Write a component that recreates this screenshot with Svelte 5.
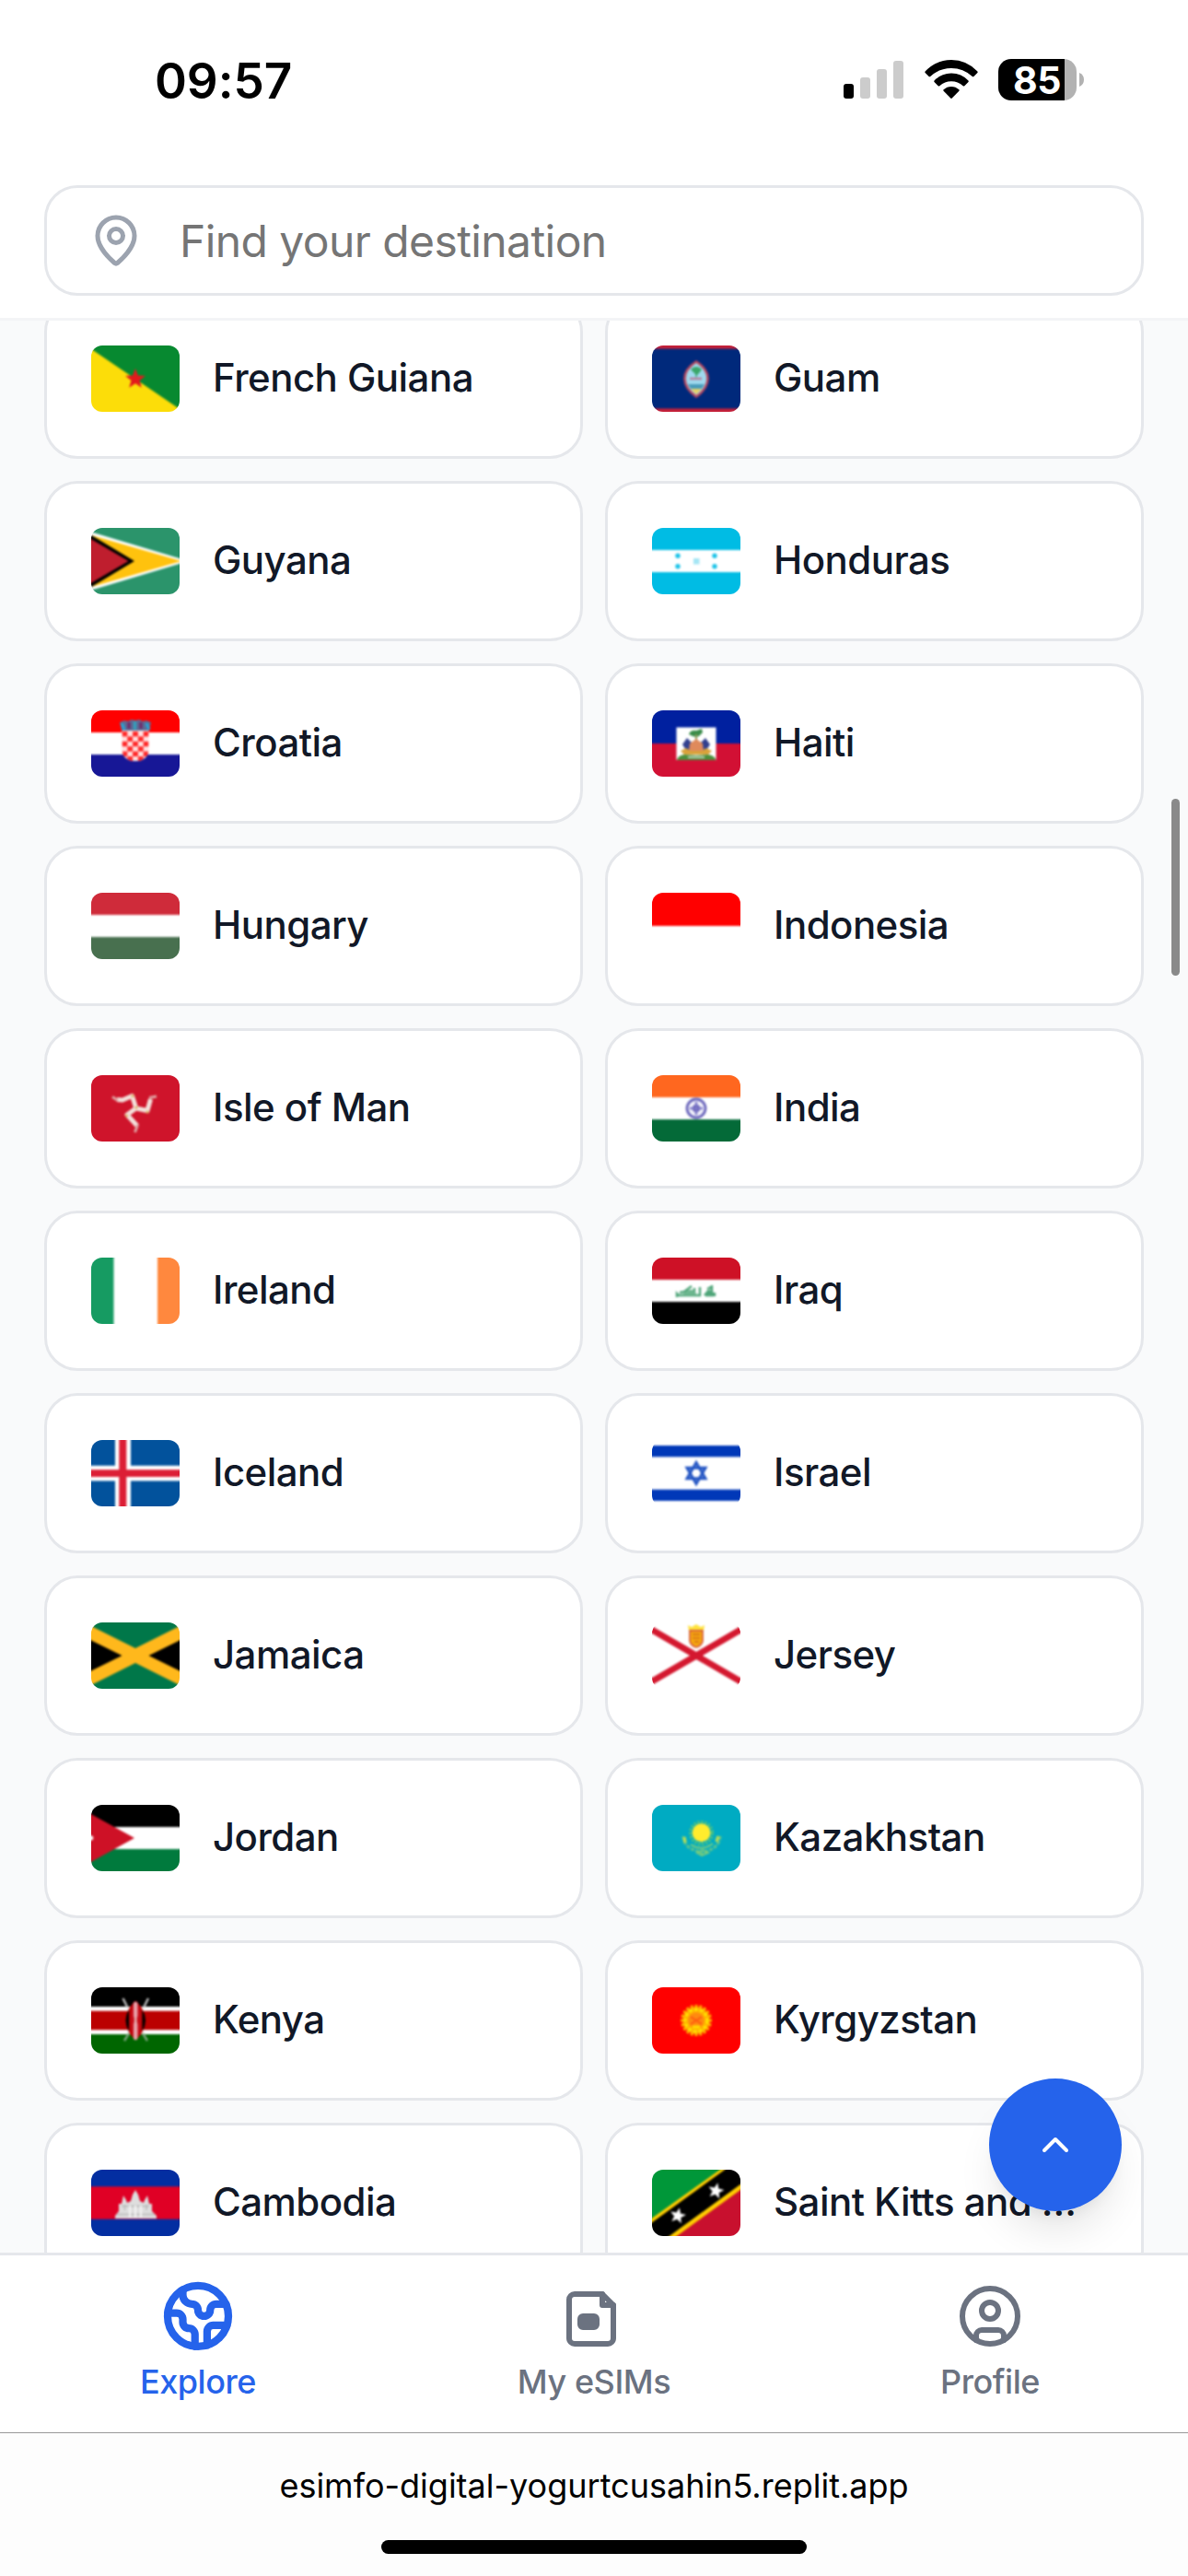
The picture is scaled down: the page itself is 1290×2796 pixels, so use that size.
<script>
  // Flags are drawn on a 96 x 72 canvas; backgrounds bleed past its edges.
  const band = (y, h, fill) => `<rect x="-8" y="${y}" width="112" height="${h}" fill="${fill}"/>`;
  const full = (fill) => band(-8, 88, fill);
  const tri = (top, mid, bottom) => band(-8, 32, top) + band(24, 24, mid) + band(48, 32, bottom);
  const poly = (points, fill) => `<polygon points="${points}" fill="${fill}"/>`;
  const star = (cx, cy, r, fill, turn = 0) => {
    const pts = [];
    for (let i = 0; i < 10; i++) {
      const a = ((i * 36 - 90 + turn) * Math.PI) / 180;
      const d = i % 2 ? r * 0.42 : r;
      pts.push(`${(cx + d * Math.cos(a)).toFixed(1)},${(cy + d * Math.sin(a)).toFixed(1)}`);
    }
    return poly(pts.join(' '), fill);
  };
  const dot = (cx, cy, r, fill) => `<circle cx="${cx}" cy="${cy}" r="${r}" fill="${fill}"/>`;

  let checks = '';
  for (let r = 0; r < 6; r++)
    for (let c = 0; c < 5; c++)
      if ((r + c) % 2 === 0) checks += `<rect x="${33.5 + c * 5.8}" y="${23 + r * 5.4}" width="5.8" height="5.4" fill="#ff2a2a"/>`;

  let rays = '';
  for (let i = 0; i < 20; i++) rays += `<path d="M48 19v8" stroke="#ffb400" stroke-width="3" transform="rotate(${i * 18} 48 36)"/>`;

  const countries = [
    { name: 'French Guiana', flag: full('#078930') + poly('-8,-1.6 104,74.4 104,84 -8,84', '#fcdd09') + star(48, 36.5, 11.5, '#e21a1c') },
    {
      name: 'Guam',
      flag: full('#c62139') + band(3.6, 64.8, '#00297b') +
        '<path d="M48 17.5Q61 26 60.500 36.500Q60 47 48 55.500Q36 47 35.500 36.500Q35 26 48 17.500Z" fill="#9fd9ee" stroke="#b5485f" stroke-width="2.6"/><path d="M42 26q6-6 12 0l-3 4-2 2-1 4-1-5z" fill="#3aa66a"/><path d="M41 36h13" stroke="#b77f9c" stroke-width="2.500"/><path d="M39 42h18l-3 5H42z" fill="#4a9cba"/><path d="M42 47h12l-6 6z" fill="#e8d265"/>'
    },
    { name: 'Guyana', flag: full('#2b946b') + poly('-8,2 102,35 102,37 -8,70', '#fff') + poly('-8,5.500 98,36 -8,66.500', '#ffc20e') + poly('-8,3 47,36 -8,69', '#000') + poly('-8,7.500 40.500,36 -8,64.500', '#bf1e2e') },
    {
      name: 'Honduras',
      flag: tri('#00bce4', '#fff', '#00bce4') + dot(28, 30.3, 2.7, '#1fc4e8') + dot(28, 41.7, 2.7, '#1fc4e8') + dot(68, 30.3, 2.7, '#1fc4e8') + dot(68, 41.7, 2.7, '#1fc4e8') + '<rect x="45" y="33" width="6.500" height="6.500" fill="#a5e6f5"/>'
    },
    {
      name: 'Croatia',
      flag: tri('#f00', '#fff', '#171796') +
        `<clipPath id="hr"><path d="M33.500 22h29v22q-1 8-10 11h-9q-9-3-10-11z"/></clipPath><g clip-path="url(#hr)"><rect x="33" y="22" width="30" height="34" fill="#ffe0e0"/>${checks}</g><path d="M31 13l5-2 4 1 4-2 4 1 4-1 4 2 4-1 5 2-2 9H33z" fill="#5b6c96"/><path d="M33 14l3 7M60 14l3 7" stroke="#2aa3d4" stroke-width="3"/><path d="M41 13v7M54 13v7" stroke="#702d6c" stroke-width="3.500"/><path d="M47.500 12v9" stroke="#32a0bd" stroke-width="3"/>`
    },
    {
      name: 'Haiti',
      flag: band(-8, 44, '#00209f') + band(36, 44, '#d21034') +
        '<rect x="26.500" y="18.500" width="43" height="35.500" fill="#fff"/><path d="M40 26q2-5 8-4l6-2 1 4-4 4-3 1-4-1z" fill="#3a8c4a"/><path d="M48 26v16" stroke="#8a9a55" stroke-width="2"/><path d="M33 37l5-7 5 5 1 7-6 3zM63 37l-5-7-5 5-1 7 6 3z" fill="#32408f"/><path d="M41 36l7-5 7 5 1 8H40z" fill="#df8a5c"/><path d="M31 44l6-3 5 3h12l5-3 6 3-4 4H35z" fill="#d9a23a"/><path d="M27 54q1-5 8-6l13 1 13-1q7 1 8.500 6z" fill="#4c8f3c"/><path d="M39 50h18v2H39z" fill="#b8cfb0"/>'
    },
    { name: 'Hungary', flag: tri('#cf2b3a', '#fff', '#48704f') },
    { name: 'Indonesia', flag: band(-8, 44, '#f00') + band(36, 44, '#fff') },
    {
      name: 'Isle of Man',
      flag: full('#cf142b') +
        '<g fill="none" stroke="#f3dfda" stroke-width="5" stroke-linejoin="round"><path d="M28 26.500L34 27L44.500 22.500L48.500 35"/><path d="M64.500 26L61 38.500L49 36"/><path d="M48.500 36L39 43L50 55"/></g><g fill="none" stroke="#dfa0a0" stroke-width="3"><path d="M23 23.500L29 27.500M71 23L63 24.500M50.500 54L47.500 62"/></g><g fill="#d9b25a"><circle cx="45" cy="22.500" r="1.500"/><circle cx="61" cy="40" r="1.500"/><circle cx="38.500" cy="44" r="1.500"/><circle cx="49" cy="35" r="1.500"/></g>'
    },
    {
      name: 'India',
      flag: tri('#ff671f', '#fff', '#046a38') + '<circle cx="48" cy="36" r="10" fill="#f1f1fa" stroke="#6a65bb" stroke-width="2.800"/><circle cx="48" cy="36" r="4" fill="#5750ae"/><path d="M48 29v14M41 36h14" stroke="#7e79c8" stroke-width="2.600"/>'
    },
    { name: 'Ireland', flag: full('#fff') + '<rect x="-8" y="-8" width="32.500" height="88" fill="#169b62"/><rect x="72" y="-8" width="32" height="88" fill="#ff883e"/>' },
    {
      name: 'Iraq',
      flag: tri('#ce1126', '#fff', '#000') + '<g fill="none" stroke="#4fa579" stroke-width="2.400"><path d="M27 43v-4l2 2h23v-9M30 38l5-1 8-6M36 40l2-3 5-1 3 3v-6M57 41l5-6M60 34l4-2 2 9M65 30v8l3 1v3M58 41h9"/></g>' + poly('31,41 38,36 44,35 50,41', '#6db68e') + poly('56,41 63,35 67,41', '#4fa579')
    },
    {
      name: 'Iceland',
      flag: full('#02529c') + '<rect x="26" y="-8" width="17" height="88" fill="#fff"/>' + band(27.8, 16.6, '#fff') + '<rect x="30.300" y="-8" width="8" height="88" fill="#dc1e35"/>' + band(32.2, 7.8, '#dc1e35')
    },
    {
      name: 'Israel',
      flag: full('#fff') + band(6, 12.3, '#0038b8') + band(53.7, 12.3, '#0038b8') + '<path d="M48 24.500l10 17.200H38zM48 47.500l10-17.200H38z" fill="none" stroke="#2456c4" stroke-width="3"/>'
    },
    { name: 'Jamaica', flag: full('#ffb81c') + poly('-8,0 -8,-8 104,-8 104,0 48,28', '#007749') + poly('-8,72 -8,80 104,80 104,72 48,44', '#007749') + poly('-8,15.500 33.500,36 -8,56.500', '#000') + poly('104,15.500 62.500,36 104,56.500', '#000') },
    {
      name: 'Jersey',
      flag: full('#fff') + '<path d="M-8 3.300L104 68.700M104 3.300L-8 68.700" stroke="#d4182f" stroke-width="7"/><path d="M39 3l4 2 5-3 5 3 4-2-1 6H40z" fill="#ffe23c"/><path d="M41 9h14v11q-1 5-7 7-6-2-7-7z" fill="#f6a80f" stroke="#d9623a" stroke-width="1.800"/><path d="M44 13h8M44 17h8M46 21h5" stroke="#d16a1a" stroke-width="1.500"/>'
    },
    { name: 'Jordan', flag: tri('#000', '#fff', '#007a3d') + poly('-8,5.700 47,36 -8,66.300', '#ce1126') + dot(-0.5, 36, 2.8, '#fff') },
    {
      name: 'Kazakhstan',
      flag: full('#00abc2') + '<circle cx="53.600" cy="30.500" r="12" fill="none" stroke="#64c96d" stroke-width="3" stroke-dasharray="2 2"/>' + dot(53.6, 30.3, 10, '#ffec2d') + '<path d="M34 34q1 13 15 16l5 3 6-3q13-4 14-16" fill="none" stroke="#5dc58c" stroke-width="3" stroke-dasharray="4 1.500"/><path d="M35 35l1 6M72 34l-2 6" stroke="#b3dc58" stroke-width="3.500"/><path d="M42 43q12 8 24-1M49 52l6-3 6 3-7 3z" fill="none" stroke="#79cc7c" stroke-width="2"/>'
    },
    {
      name: 'Kenya',
      flag: band(-8, 29, '#000') + band(21, 30, '#fff') + band(25.7, 20.5, '#b00') + band(51, 30, '#060') +
        '<path d="M34.500 12l5 10M62 12l-5 10" stroke="#bbb" stroke-width="2.400"/><path d="M36 58l5-8M61 58l-5-8" stroke="#7da47d" stroke-width="2.400"/><ellipse cx="48.200" cy="36" rx="9.500" ry="19" fill="#b00"/><path d="M41 24q-7 12 0 24zM55.500 24q7 12 0 24z" fill="#000"/><ellipse cx="48.200" cy="36" rx="6" ry="21" fill="#c60a16"/><path d="M48.200 18v13M48.200 40v15" stroke="#e9a0a8" stroke-width="4.500" stroke-linecap="round"/><path d="M48.200 32v7" stroke="#e6a6aa" stroke-width="3"/>'
    },
    { name: 'Kyrgyzstan', flag: full('#f00') + rays + dot(48, 36, 14.5, '#ffac00') + '<circle cx="48" cy="36" r="12" fill="none" stroke="#ffe000" stroke-width="3.500" stroke-dasharray="4 2"/>' + dot(48, 36, 8.5, '#ff8a10') + '<path d="M42 32l12 8M54 32l-12 8" stroke="#ff5a10" stroke-width="1.800"/><path d="M44 43h8" stroke="#ffe100" stroke-width="3"/>' },
    {
      name: 'Cambodia',
      flag: full('#032ea1') + band(18.3, 35.4, '#e00025') +
        '<path d="M26 53v-3l4-5v-8h3l2-9 3 5 1 3 4-2 2-7 3-5 3 5 2 7 4 2 1-3 3-5 2 9h3v8l5 5v3z" fill="#dedede"/><path d="M28 48.500h41M33 39.500h30" stroke="#b9b9b9" stroke-width="1.300"/><path d="M42 39v13M48 39v13M54 39v13" stroke="#f5f5f5" stroke-width="2"/><path d="M36.500 38v6M60 38v6" stroke="#b5b5b5" stroke-width="1.200"/>'
    },
    {
      name: 'Saint Kitts and Nevis',
      flag: full('#009739') + poly('104,-8 104,80 10,80', '#c8102e') + poly('-8,58.300 85,-8 104,-8 104,16 16,80 -8,80', '#ffcd00') + poly('-8,63 90,-8 104,-8 104,10 8,80 -8,80', '#000') + star(69.4, 23, 9, '#fff', 12) + star(28, 50, 9, '#fff', 12)
    }
  ];
</script>

<div class="screen">
  <header class="header">
    <div class="status">
      <span class="time">09:57</span>
      <div class="system">
        <svg class="signal" viewBox="0 0 65 42">
          <rect y="25" width="11" height="16" rx="3" fill="#000" />
          <rect x="18" y="18" width="11" height="23" rx="3" fill="#ccc" />
          <rect x="36" y="9" width="11" height="32" rx="3" fill="#ccc" />
          <rect x="54" y="0" width="11" height="41" rx="3" fill="#ccc" />
        </svg>
        <svg class="wifi" viewBox="0 0 58 42">
          <path d="M.6 12.500Q12.500 0 29 0t28.400 12.500q.6.800 0 1.500l-4 4q-.8.700-1.600 0Q42 9 29 9T6.200 18q-.8.700-1.600 0l-4-4q-.6-.7 0-1.500z" />
          <path d="M10.500 22.500Q18 14.500 29 14.500t18.500 8q.6.800 0 1.500l-4.200 4.200q-.8.700-1.600 0-5.500-4.900-12.700-4.900t-12.700 4.900q-.8.700-1.600 0L10.500 24q-.6-.7 0-1.500z" />
          <path d="M20.600 32.300q3.600-3.400 8.400-3.400t8.400 3.400q.6.700 0 1.400l-7.600 7.800q-.8.800-1.600 0l-7.600-7.800q-.6-.7 0-1.400z" />
        </svg>
        <div class="battery">
          <div class="cell"><span>85</span></div>
          <svg class="nub" viewBox="0 0 5 15"><path d="M0 0q5 2 5 7.500T0 15z" fill="#b2b2b2" /></svg>
        </div>
      </div>
    </div>
    <div class="search">
      <svg viewBox="0 0 24 24" class="pin">
        <path d="M20 10c0 4.993-5.539 10.193-7.399 11.799a1 1 0 0 1-1.202 0C9.539 20.193 4 14.993 4 10a8 8 0 0 1 16 0" />
        <circle cx="12" cy="10" r="3" />
      </svg>
      <span class="placeholder">Find your destination</span>
    </div>
  </header>

  <main class="list">
    <div class="grid">
      {#each countries as country}
        <div class="card">
          <svg class="flag" viewBox="0 0 96 72"><g class="art">{@html country.flag}</g></svg>
          <span class="name">{country.name}</span>
        </div>
      {/each}
    </div>
    <div class="scrollbar"></div>
    <button class="to-top" aria-label="Back to top">
      <svg viewBox="0 0 24 24"><path d="m18 15-6-6-6 6" /></svg>
    </button>
  </main>

  <nav class="tabs">
    <div class="tab active">
      <svg viewBox="0 0 24 24">
        <path d="M21.540 15H17a2 2 0 0 0-2 2v4.540" />
        <path d="M7 3.340V5a3 3 0 0 0 3 3a2 2 0 0 1 2 2c0 1.100.9 2 2 2a2 2 0 0 0 2-2c0-1.100.9-2 2-2h3.170" />
        <path d="M11 21.950V18a2 2 0 0 0-2-2a2 2 0 0 1-2-2v-1a2 2 0 0 0-2-2H2.050" />
        <circle cx="12" cy="12" r="10" />
      </svg>
      <span>Explore</span>
    </div>
    <div class="tab">
      <svg viewBox="0 0 24 24">
        <path d="M15 4H5a2 2 0 0 0-2 2v14a2 2 0 0 0 2 2h12a2 2 0 0 0 2-2V8z" />
        <path d="M15 4v4h4" />
        <rect x="7" y="12" width="6" height="4" rx="1" fill="currentColor" />
      </svg>
      <span>My eSIMs</span>
    </div>
    <div class="tab">
      <svg viewBox="0 0 24 24">
        <circle cx="12" cy="12" r="10" />
        <circle cx="12" cy="10" r="3" />
        <path d="M7 20.662V19a2 2 0 0 1 2-2h6a2 2 0 0 1 2 2v1.662" />
      </svg>
      <span>Profile</span>
    </div>
  </nav>

  <footer class="browser">
    <span class="url">esimfo-digital-yogurtcusahin5.replit.app</span>
    <div class="home"></div>
  </footer>
</div>

<style>
  :global(body) {
    margin: 0;
    background: #fff;
  }
  .screen {
    width: 1290px;
    height: 2796px;
    display: flex;
    flex-direction: column;
    overflow: hidden;
    background: #fff;
    font-family: Inter, 'Liberation Sans', sans-serif;
  }
  .screen * {
    box-sizing: border-box;
  }
  .header {
    flex: none;
    height: 348px;
    padding: 0 48px;
    border-bottom: 3px solid #f3f4f6;
  }
  .status {
    height: 201px;
    padding: 57px 65px 0 120px;
    display: flex;
    justify-content: space-between;
    align-items: flex-start;
  }
  .time {
    font-size: 53px;
    line-height: 62px;
    font-weight: 600;
    letter-spacing: -0.1px;
    color: #000;
  }
  .system {
    display: flex;
    align-items: flex-start;
    padding-top: 7px;
  }
  .signal {
    width: 65px;
    height: 42px;
    margin-top: 2px;
  }
  .wifi {
    width: 58px;
    height: 42px;
    margin: 1px 22px 0 23px;
  }
  .battery {
    display: flex;
    align-items: center;
    gap: 3px;
  }
  .cell {
    width: 85px;
    height: 45px;
    border-radius: 14px;
    background: linear-gradient(90deg, #000 72px, #b2b2b2 72px);
    color: #fff;
    font-size: 41px;
    line-height: 46px;
    font-weight: 700;
    letter-spacing: -0.5px;
    padding-left: 16px;
  }
  .nub {
    width: 5px;
    height: 15px;
  }
  .search {
    height: 120px;
    border: 3px solid #e5e7eb;
    border-radius: 36px;
    display: flex;
    align-items: center;
    gap: 39px;
    padding-left: 45px;
    font-size: 48px;
    line-height: 72px;
    letter-spacing: -0.58px;
    color: #757575;
  }
  .placeholder {
    padding-top: 2px;
  }
  .pin {
    width: 60px;
    height: 60px;
    fill: none;
    stroke: #9ca3af;
    stroke-width: 2;
    stroke-linecap: round;
    stroke-linejoin: round;
  }
  .list {
    flex: 1;
    min-height: 0;
    position: relative;
    overflow: hidden;
    background: #f9fafb;
    padding: 0 48px;
  }
  .grid {
    display: grid;
    grid-template-columns: 1fr 1fr;
    grid-auto-rows: 174px;
    gap: 24px;
    margin-top: -24px;
  }
  .card {
    min-width: 0;
    display: flex;
    align-items: center;
    gap: 36px;
    padding: 0 48px;
    background: #fff;
    border: 3px solid #e5e7eb;
    border-radius: 36px;
  }
  .flag {
    flex: none;
    width: 96px;
    height: 72px;
    border-radius: 12px;
    overflow: hidden;
  }
  .art {
    filter: blur(0.8px);
  }
  .name {
    min-width: 0;
    overflow: hidden;
    text-overflow: ellipsis;
    white-space: nowrap;
    padding-bottom: 3px;
    font-size: 42px;
    line-height: 60px;
    font-weight: 500;
    letter-spacing: -0.54px;
    color: #111827;
  }
  .scrollbar {
    position: absolute;
    right: 9px;
    top: 519px;
    width: 9px;
    height: 192px;
    border-radius: 5px;
    background: #8a8a8a;
  }
  .to-top {
    position: absolute;
    right: 72px;
    bottom: 45px;
    width: 144px;
    height: 144px;
    padding: 0;
    border: 0;
    border-radius: 50%;
    background: #2563eb;
    display: flex;
    align-items: center;
    justify-content: center;
    box-shadow: 0 30px 45px -9px rgb(0 0 0 / 0.1), 0 12px 18px -12px rgb(0 0 0 / 0.1);
  }
  .to-top svg {
    width: 48px;
    height: 48px;
    fill: none;
    stroke: #fff;
    stroke-width: 2;
    stroke-linecap: round;
    stroke-linejoin: round;
  }
  .tabs {
    flex: none;
    height: 195px;
    border-top: 3px solid #e5e7eb;
    display: flex;
    padding-top: 30px;
  }
  .tab {
    flex: 1;
    display: flex;
    flex-direction: column;
    align-items: center;
    gap: 11px;
    color: #6b7280;
    font-size: 36px;
    line-height: 48px;
    font-weight: 500;
    letter-spacing: -0.45px;
  }
  .tab svg {
    width: 72px;
    height: 72px;
    fill: none;
    stroke: currentColor;
    stroke-width: 2;
    stroke-linecap: round;
    stroke-linejoin: round;
  }
  .active {
    color: #2563eb;
  }
  .active svg {
    stroke-width: 2.5;
    transform: scale(1.1);
  }
  .browser {
    flex: none;
    height: 156px;
    border-top: 1px solid #999;
    background: #fdfdfd;
    display: flex;
    flex-direction: column;
    align-items: center;
    padding-top: 35px;
  }
  .url {
    font-size: 36px;
    line-height: 44px;
    color: #000;
  }
  .home {
    width: 462px;
    height: 15px;
    margin-top: 37px;
    border-radius: 8px;
    background: #000;
  }
</style>
